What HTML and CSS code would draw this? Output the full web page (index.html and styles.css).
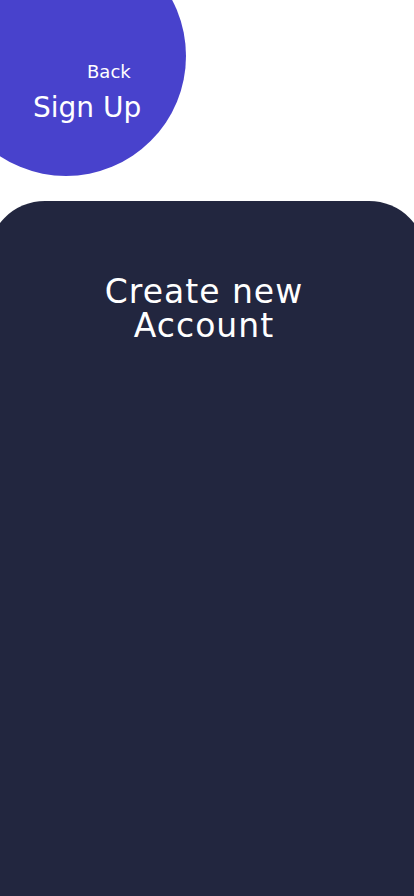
FILE: index.html
```html
<!DOCTYPE html>
<html lang="en">
<head>
<meta charset="utf-8">
<meta name="viewport" content="width=device-width, initial-scale=1">
<title>Sign Up</title>
<link rel="stylesheet" href="styles.css">
</head>
<body>
<div class="page">
  <header class="header">
    <div class="blob">
      <a class="back" href="#">Back</a>
      <h1 class="title">Sign Up</h1>
    </div>
  </header>
  <main class="card">
    <h2 class="card-title">Create new<br>Account</h2>
  </main>
</div>
</body>
</html>
```

FILE: styles.css
```css
* { box-sizing: border-box; }
html, body { margin: 0; padding: 0; }
body {
  background: #ffffff;
  font-family: "DejaVu Sans", "Open Sans", sans-serif;
  overflow: hidden;
  width: 414px;
  height: 896px;
}
.page {
  display: flex;
  flex-direction: column;
  height: 896px;
}
.header {
  height: 176px;
  flex: none;
}
.blob {
  width: 240px;
  height: 240px;
  border-radius: 50%;
  background: #4842cc;
  margin-top: -64px;
  margin-left: -54px;
  display: flex;
  flex-direction: column;
  align-items: flex-start;
  padding: 125px 0 0 87px;
}
.back {
  color: #ffffff;
  text-decoration: none;
  font-size: 18px;
  font-weight: 400;
  line-height: 22px;
  margin-left: 54px;
}
.title {
  margin: 8px 0 0;
  color: #ffffff;
  font-size: 28px;
  font-weight: 400;
  line-height: 34px;
}
.card {
  flex: 1;
  margin-top: 25px;
  margin-left: -12px;
  width: calc(100% + 24px);
  background: #22263f;
  border-radius: 57px 57px 0 0;
  display: flex;
  flex-direction: column;
  align-items: center;
  padding: 74px 6px 0 0;
}
.card-title {
  margin: 0;
  color: #ffffff;
  font-size: 33px;
  font-weight: 400;
  line-height: 34px;
  letter-spacing: 1px;
  text-align: center;
}
```
